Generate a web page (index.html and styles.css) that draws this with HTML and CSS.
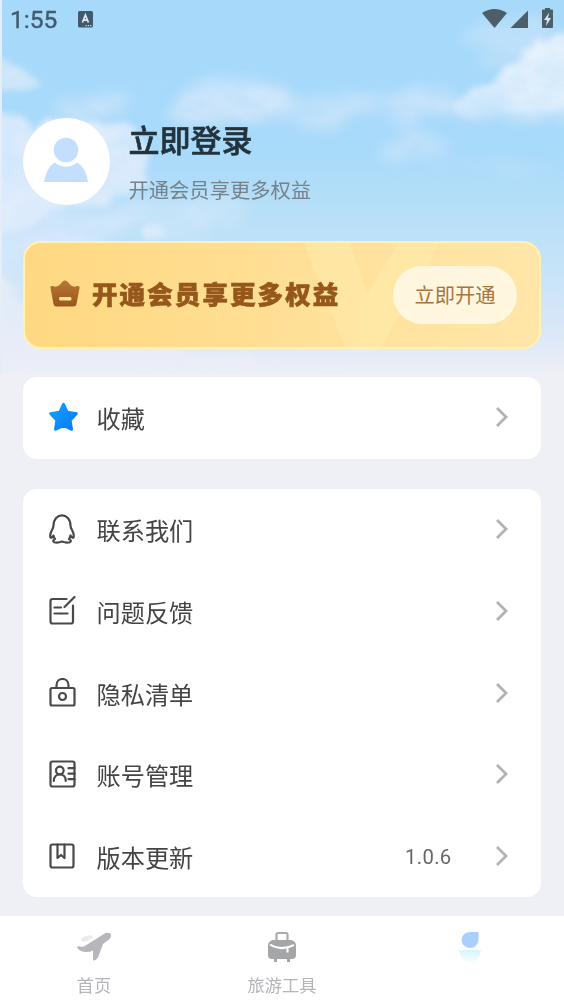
FILE: index.html
```html
<!DOCTYPE html>
<html lang="zh-CN">
<head>
<meta charset="utf-8">
<meta name="viewport" content="width=device-width, initial-scale=1">
<title>我的</title>
<link rel="stylesheet" href="styles.css">
</head>
<body>
<div class="screen">
  <svg class="sky" width="564" height="377" viewBox="0 0 564 377" aria-hidden="true">
    <defs>
      <linearGradient id="skyFill" x1="0" y1="0" x2="0" y2="1">
        <stop offset="0" stop-color="#a7d9fa"/>
        <stop offset=".4" stop-color="#a8dafa"/>
        <stop offset=".55" stop-color="#b6dff8"/>
        <stop offset=".66" stop-color="#c1e2f8"/>
        <stop offset=".85" stop-color="#d6e6f7"/>
        <stop offset=".95" stop-color="#e6ecf7"/>
        <stop offset="1" stop-color="#eff0f5"/>
      </linearGradient>
      <filter id="cloud" x="-20%" y="-20%" width="140%" height="140%" color-interpolation-filters="sRGB">
        <feTurbulence type="fractalNoise" baseFrequency=".035 .05" numOctaves="4" seed="8" result="n"/>
        <feDisplacementMap in="SourceGraphic" in2="n" scale="20" xChannelSelector="R" yChannelSelector="G"/>
        <feGaussianBlur stdDeviation="3" result="soft"/>
        <feColorMatrix in="n" type="matrix" values="0 0 0 0 1  0 0 0 0 1  0 0 0 0 1  0 0 1.600 0 -.2" result="grain"/>
        <feComposite in="soft" in2="grain" operator="in" result="lit"/>
        <feComposite in="soft" in2="lit" operator="arithmetic" k2=".68" k3=".3"/>
      </filter>
      <filter id="haze" x="-30%" y="-60%" width="160%" height="220%" color-interpolation-filters="sRGB">
        <feTurbulence type="fractalNoise" baseFrequency=".02 .04" numOctaves="4" seed="3" result="n"/>
        <feDisplacementMap in="SourceGraphic" in2="n" scale="40" xChannelSelector="R" yChannelSelector="G"/>
        <feGaussianBlur stdDeviation="7" result="soft"/>
        <feColorMatrix in="n" type="matrix" values="0 0 0 0 1  0 0 0 0 1  0 0 0 0 1  0 0 2.200 0 -.5" result="grain"/>
        <feComposite in="soft" in2="grain" operator="in" result="lit"/>
        <feComposite in="soft" in2="lit" operator="arithmetic" k2=".5" k3=".4"/>
      </filter>
      <linearGradient id="cloudFade" x1="0" y1="0" x2="0" y2="1">
        <stop offset="0" stop-color="#eaf2fd"/>
        <stop offset=".6" stop-color="#e4f0fc" stop-opacity=".9"/>
        <stop offset="1" stop-color="#e4f0fc" stop-opacity="0"/>
      </linearGradient>
    </defs>
    <rect width="564" height="377" fill="url(#skyFill)"/>
    <g filter="url(#haze)" fill="#d9e9fb">
      <ellipse cx="230" cy="103" rx="62" ry="19" opacity=".9"/>
      <ellipse cx="95" cy="104" rx="42" ry="11" opacity=".8"/>
      <ellipse cx="300" cy="112" rx="80" ry="13" opacity=".65"/>
      <ellipse cx="405" cy="106" rx="65" ry="18" opacity=".8"/>
      <ellipse cx="412" cy="148" rx="38" ry="14" opacity=".65"/>
      <ellipse cx="515" cy="40" rx="55" ry="22" opacity=".5"/>
      <ellipse cx="490" cy="165" rx="65" ry="5" opacity=".35"/>
      <ellipse cx="180" cy="214" rx="75" ry="16" opacity=".7"/>
      <ellipse cx="40" cy="225" rx="90" ry="28" opacity=".85"/>
      <ellipse cx="15" cy="280" rx="30" ry="60" opacity=".8"/>
    </g>
    <g filter="url(#cloud)">
      <path d="M-10 58Q14 60 23 70L38 83Q35 97 18 95L-10 85Z" fill="#dcebf9" opacity=".85"/>
      <path d="M-10 114Q24 110 36 128Q64 110 88 122Q130 117 143 143Q157 163 145 183Q110 205 70 208L-10 238Z" fill="#dfecfc"/>
      <path d="M452 114Q466 84 492 84Q514 62 530 52Q545 32 580 33V122Q530 142 485 124Z" fill="url(#cloudFade)"/>
      <path d="M536 50Q553 33 580 36V112H500Q512 80 536 50Z" fill="#e8f2fc" opacity=".6"/>
      <path d="M-10 275Q24 285 24 318Q120 345 190 354Q260 358 340 365L400 390H-10Z" fill="#ebeef7" opacity=".8"/>
      <path d="M148 226Q154 218 161 226L166 239H142Z" fill="#eaf3fc" opacity=".65"/>
    </g>
    <rect width="2" height="377" fill="#e5edf6"/>
    <rect y="374" width="564" height="3" fill="#eff0f5"/>
  </svg>

  <header class="status">
    <span class="status-time">1:55</span>
    <svg class="status-app" width="15" height="17" viewBox="0 0 15 17"><rect width="15" height="16.500" rx="1.500" fill="#415b6c"/><path d="M4.400 11.500 7.400 4l3 7.500M5.400 9.200h4" fill="none" stroke="#dceefa" stroke-width="1.700"/><path d="M7.500 14.600h1.300m1 0h1.300m1 0h1.300" stroke="#b9d9ec" stroke-width="1.300"/></svg>
    <svg class="status-signal" width="72" height="22" viewBox="0 0 72 22" fill="#4c5e6a"><path d="M0 5Q12.500-3 25 5L12.500 20Z"/><path d="M46 2.500V20H28.500Z"/><path d="M61 1.500h2V0h5v1.500h2a1 1 0 0 1 1 1V19a1 1 0 0 1-1 1h-9a1 1 0 0 1-1-1V2.500a1 1 0 0 1 1-1Z"/><path d="M67.200 4.500 62 12h3l-1 6 5-8h-3Z" fill="#d5e9f8"/></svg>
  </header>

  <main class="content">
    <section class="profile">
      <div class="avatar"><svg width="46" height="46" viewBox="0 0 46 46" fill="#c4deff"><circle cx="23" cy="13" r="12.300"/><path d="M11.500 25.500Q23 34 34.500 25.500Q43 31 45 45H1Q3 31 11.500 25.500Z"/></svg></div>
      <div class="profile-text">
        <h1 class="profile-name">立即登录</h1>
        <p class="profile-note">开通会员享更多权益</p>
      </div>
    </section>

    <section class="vip">
      <svg class="vip-mark" width="146" height="108" viewBox="0 0 146 108" fill="#fff3b8" opacity=".3"><path d="M0 0H46L64 53 97 0H138L77 108H43Z"/></svg>
      <svg class="vip-crown" width="30" height="27" viewBox="0 0 30 27"><defs><linearGradient id="crown" x1="0" y1="0" x2="0" y2="1"><stop offset="0" stop-color="#b97836"/><stop offset="1" stop-color="#985719"/></linearGradient></defs><path d="M.5 8Q0 5.500 3 6Q6 7.500 9 5.500L13 1.200Q15-.2 17 1.200L21 5.500Q24 7.500 27 6Q30 5.500 29.500 8L26.500 24Q26 26.500 23.500 26.500H6.500Q4 26.500 3.500 24Z" fill="url(#crown)"/><rect x="9" y="17" width="12.500" height="3.600" rx="1.500" fill="#ffe39b"/></svg>
      <strong class="vip-title">开通会员享更多权益</strong>
      <button class="vip-button">立即开通</button>
    </section>

    <section class="card card-favorite">
      <a class="row">
        <svg class="row-icon" width="30" height="30" viewBox="0 0 30 30"><defs><linearGradient id="star" x1="0" y1="0" x2="1" y2="1"><stop offset="0" stop-color="#15a4ff"/><stop offset="1" stop-color="#0577ff"/></linearGradient></defs><path d="M14.500 2 18.400 10 27.500 11.500 21.300 18.300 22.700 27.500 14.500 23.500 6.300 27.500 7.700 18.300 1.500 11.500 10.600 10Z" fill="url(#star)" stroke="url(#star)" stroke-width="2.600" stroke-linejoin="round"/></svg>
        <span class="row-label">收藏</span>
        <svg class="row-arrow" width="14" height="22" viewBox="0 0 14 22"><path d="M2 2 11 11 2 20"/></svg>
      </a>
    </section>

    <section class="card card-menu">
      <a class="row">
        <svg class="row-icon line" width="30" height="30" viewBox="0 0 30 30"><path d="M4.500 11.500C4.500-2 21.500-2 21.500 11.500Q21.500 13.500 23 16Q25.500 20.500 24.500 23.500Q23.500 24.500 21.500 21.500Q21 23.500 20 25Q23 26.800 21 28.200Q17 29.200 13 27.500Q9 29.200 5 28.200Q3 26.800 6 25Q5 23.500 4.500 21.500Q2.500 24.500 1.500 23.500Q.5 20.500 3 16Q4.500 13.500 4.500 11.500Z"/></svg>
        <span class="row-label">联系我们</span>
        <svg class="row-arrow" width="14" height="22" viewBox="0 0 14 22"><path d="M2 2 11 11 2 20"/></svg>
      </a>
      <a class="row">
        <svg class="row-icon line" width="30" height="30" viewBox="0 0 30 30"><path d="M17.500 3H3.500Q1.500 3 1.500 5V25.500Q1.500 27.500 3.500 27.500H22Q24 27.500 24 25.500V9.500M5.500 11.500h6.500M5.500 17.500h13M15.500 11 25.500 1"/></svg>
        <span class="row-label">问题反馈</span>
        <svg class="row-arrow" width="14" height="22" viewBox="0 0 14 22"><path d="M2 2 11 11 2 20"/></svg>
      </a>
      <a class="row">
        <svg class="row-icon line" width="30" height="30" viewBox="0 0 30 30"><rect x="1.500" y="10" width="24" height="17.500" rx="1.500"/><path d="M7.500 10V7.500C7.500-1.200 19.500-1.200 19.500 7.500V10"/><circle cx="13.500" cy="18.500" r="3.500"/></svg>
        <span class="row-label">隐私清单</span>
        <svg class="row-arrow" width="14" height="22" viewBox="0 0 14 22"><path d="M2 2 11 11 2 20"/></svg>
      </a>
      <a class="row">
        <svg class="row-icon line" width="30" height="30" viewBox="0 0 30 30"><rect x="1.500" y="2.500" width="24" height="25" rx="2"/><circle cx="10.800" cy="11.500" r="3.800"/><path d="M4.800 22Q5 15.500 10.800 15.500T16.800 22M19.500 9.200h6M19.500 14.700h6M19.500 20.200h6"/></svg>
        <span class="row-label">账号管理</span>
        <svg class="row-arrow" width="14" height="22" viewBox="0 0 14 22"><path d="M2 2 11 11 2 20"/></svg>
      </a>
      <a class="row">
        <svg class="row-icon line" width="30" height="30" viewBox="0 0 30 30"><rect x="1.500" y="3.500" width="23" height="23" rx="2"/><path d="M8.500 3.500v13.500l3.500-3 3.500 3V3.500"/></svg>
        <span class="row-label">版本更新</span>
        <span class="row-value">1.0.6</span>
        <svg class="row-arrow" width="14" height="22" viewBox="0 0 14 22"><path d="M2 2 11 11 2 20"/></svg>
      </a>
    </section>
  </main>

  <nav class="tabs">
    <a class="tab">
      <svg width="36" height="32" viewBox="0 0 36 32"><path d="M8 10.500Q4 10.500 5.500 7.500Q7.500 5 10 5.500Q15 3 17.500 6L10 10.500Z" fill="#e8e9eb"/><path d="M.8 16.500Q2 14.500 5.500 16L8 15.500 27.500 3.200Q32 .5 34.800 3Q36 5.500 33 8.500L27 13 22.500 25.500Q20.500 29.500 17 29.500V19.500Q12 22 6.500 20.500Q2.500 19 .8 16.500Z" fill="#b5b7ba"/></svg>
      <span class="tab-label">首页</span>
    </a>
    <a class="tab">
      <svg width="30" height="32" viewBox="0 0 30 32"><path d="M9.500 10V3.500Q9.500 2 11 2H19Q20.500 2 20.500 3.500V10" fill="none" stroke="#a9abad" stroke-width="2.200"/><path d="M6 9H24Q29 10 29 15V24Q29 28 25 28H5Q1 28 1 24V15Q1 10 6 9ZM7 26h3v5H7ZM20 26h3v5h-3Z" fill="#a4a6a8"/><path d="M3 13.500Q14 20.500 27 14M20.500 17v4.500" fill="none" stroke="#fff" stroke-width="2"/></svg>
      <span class="tab-label">旅游工具</span>
    </a>
    <a class="tab tab-active">
      <svg width="26" height="34" viewBox="0 0 26 34"><defs><linearGradient id="body" x1="0" y1="0" x2="0" y2="1"><stop offset="0" stop-color="#d8f5fb"/><stop offset="1" stop-color="#f4fdff"/></linearGradient></defs><path d="M13 1h8.500V9.500A8.500 8 0 1 1 13 1Z" fill="#a9cfff"/><path d="M2 19H24Q22 31 13 31T2 19Z" fill="url(#body)"/></svg>
    </a>
  </nav>
</div>
</body>
</html>
```

FILE: styles.css
```css
* {
  box-sizing: border-box;
}

body {
  margin: 0;
  font-family: Roboto, "Noto Sans CJK SC", sans-serif;
  color: #444;
  background: #eff0f5;
}

.screen {
  position: relative;
  display: flex;
  flex-direction: column;
  width: 564px;
  height: 1004px;
  overflow: hidden;
}

.sky {
  position: absolute;
  top: 0;
  left: 0;
}

.status {
  position: relative;
  display: flex;
  align-items: flex-start;
  height: 38px;
  padding: 8px 10px 0;
}

.status-time {
  width: 68px;
  font-size: 24.500px;
  line-height: 24px;
  font-weight: 400;
  color: #415b6c;
  -webkit-text-stroke: .4px #415b6c;
}

.status-app {
  margin-top: 3px;
}

.status-signal {
  margin-left: auto;
}

.content {
  position: relative;
  flex: 1;
  padding: 80px 23px 0;
}

.profile {
  display: flex;
  align-items: center;
  gap: 18.500px;
  height: 87px;
}

.avatar {
  display: flex;
  align-items: center;
  justify-content: center;
  width: 87px;
  height: 87px;
  padding: 0 1px 4px 0;
  border-radius: 50%;
  background: #fff;
}

.profile-name {
  margin: 0;
  padding-top: 1px;
  font-size: 31px;
  line-height: 46px;
  font-weight: 500;
  color: #23333e;
  -webkit-text-stroke: .6px #23333e;
}

.profile-note {
  margin: 11px 0 0;
  font-size: 20.300px;
  line-height: 30px;
  color: #75828b;
}

.vip {
  position: relative;
  display: flex;
  align-items: center;
  height: 108px;
  margin-top: 36px;
  padding: 0 22px 0 25px;
  border: 2px solid #fff0b6;
  border-radius: 18px;
  background: linear-gradient(90deg, #ffd881, #ffe19a 60%, #ffe6a8);
  overflow: hidden;
}

.vip-mark {
  position: absolute;
  top: -2px;
  left: 278px;
}

.vip-crown {
  position: relative;
  margin-bottom: 3px;
}

.vip-title {
  position: relative;
  margin-left: 12px;
  font-size: 25.500px;
  line-height: 36px;
  font-weight: 900;
  letter-spacing: 2.100px;
  color: #95571b;
  -webkit-text-stroke: .6px #95571b;
}

.vip-button {
  position: relative;
  width: 124px;
  height: 58px;
  margin-left: auto;
  padding: 0 0 2px;
  border: 0;
  border-radius: 29px;
  background: #fff6df;
  font: 400 20.300px/56px "Noto Sans CJK SC", sans-serif;
  color: #a87540;
}

.card {
  border-radius: 14px;
  background: #fff;
}

.card-favorite {
  margin-top: 28px;
}

.card-menu {
  margin-top: 30px;
}

.row {
  display: flex;
  align-items: center;
  height: 81.600px;
  padding: 0 32.500px 0 26px;
}

.row-icon {
  flex: none;
}

.line {
  fill: none;
  stroke: #494949;
  stroke-width: 2.200;
  stroke-linejoin: round;
  stroke-linecap: round;
}

.row-label {
  margin-left: 17.500px;
  padding-top: 6px;
  font-size: 24.200px;
  line-height: 36px;
}

.card-favorite .row-label {
  padding-top: 4px;
}

.row-value {
  margin-left: auto;
  padding-top: 2px;
  font-size: 20.300px;
  letter-spacing: .3px;
  color: #666;
}

.row-arrow {
  flex: none;
  margin-left: auto;
  fill: none;
  stroke: #b0b2b5;
  stroke-width: 2.800;
}

.card-favorite .row-arrow,
.card-favorite .row-icon {
  margin-bottom: 1px;
}

.row-value + .row-arrow {
  margin-left: 43px;
}

.tabs {
  position: relative;
  display: grid;
  grid-template-columns: repeat(3, 1fr);
  height: 88px;
  background: #fff;
}

.tab {
  display: flex;
  flex-direction: column;
  align-items: center;
  padding-top: 15px;
}

.tab-label {
  margin-top: 10px;
  font-size: 17.200px;
  line-height: 26px;
  color: #b3b5b8;
}
```
